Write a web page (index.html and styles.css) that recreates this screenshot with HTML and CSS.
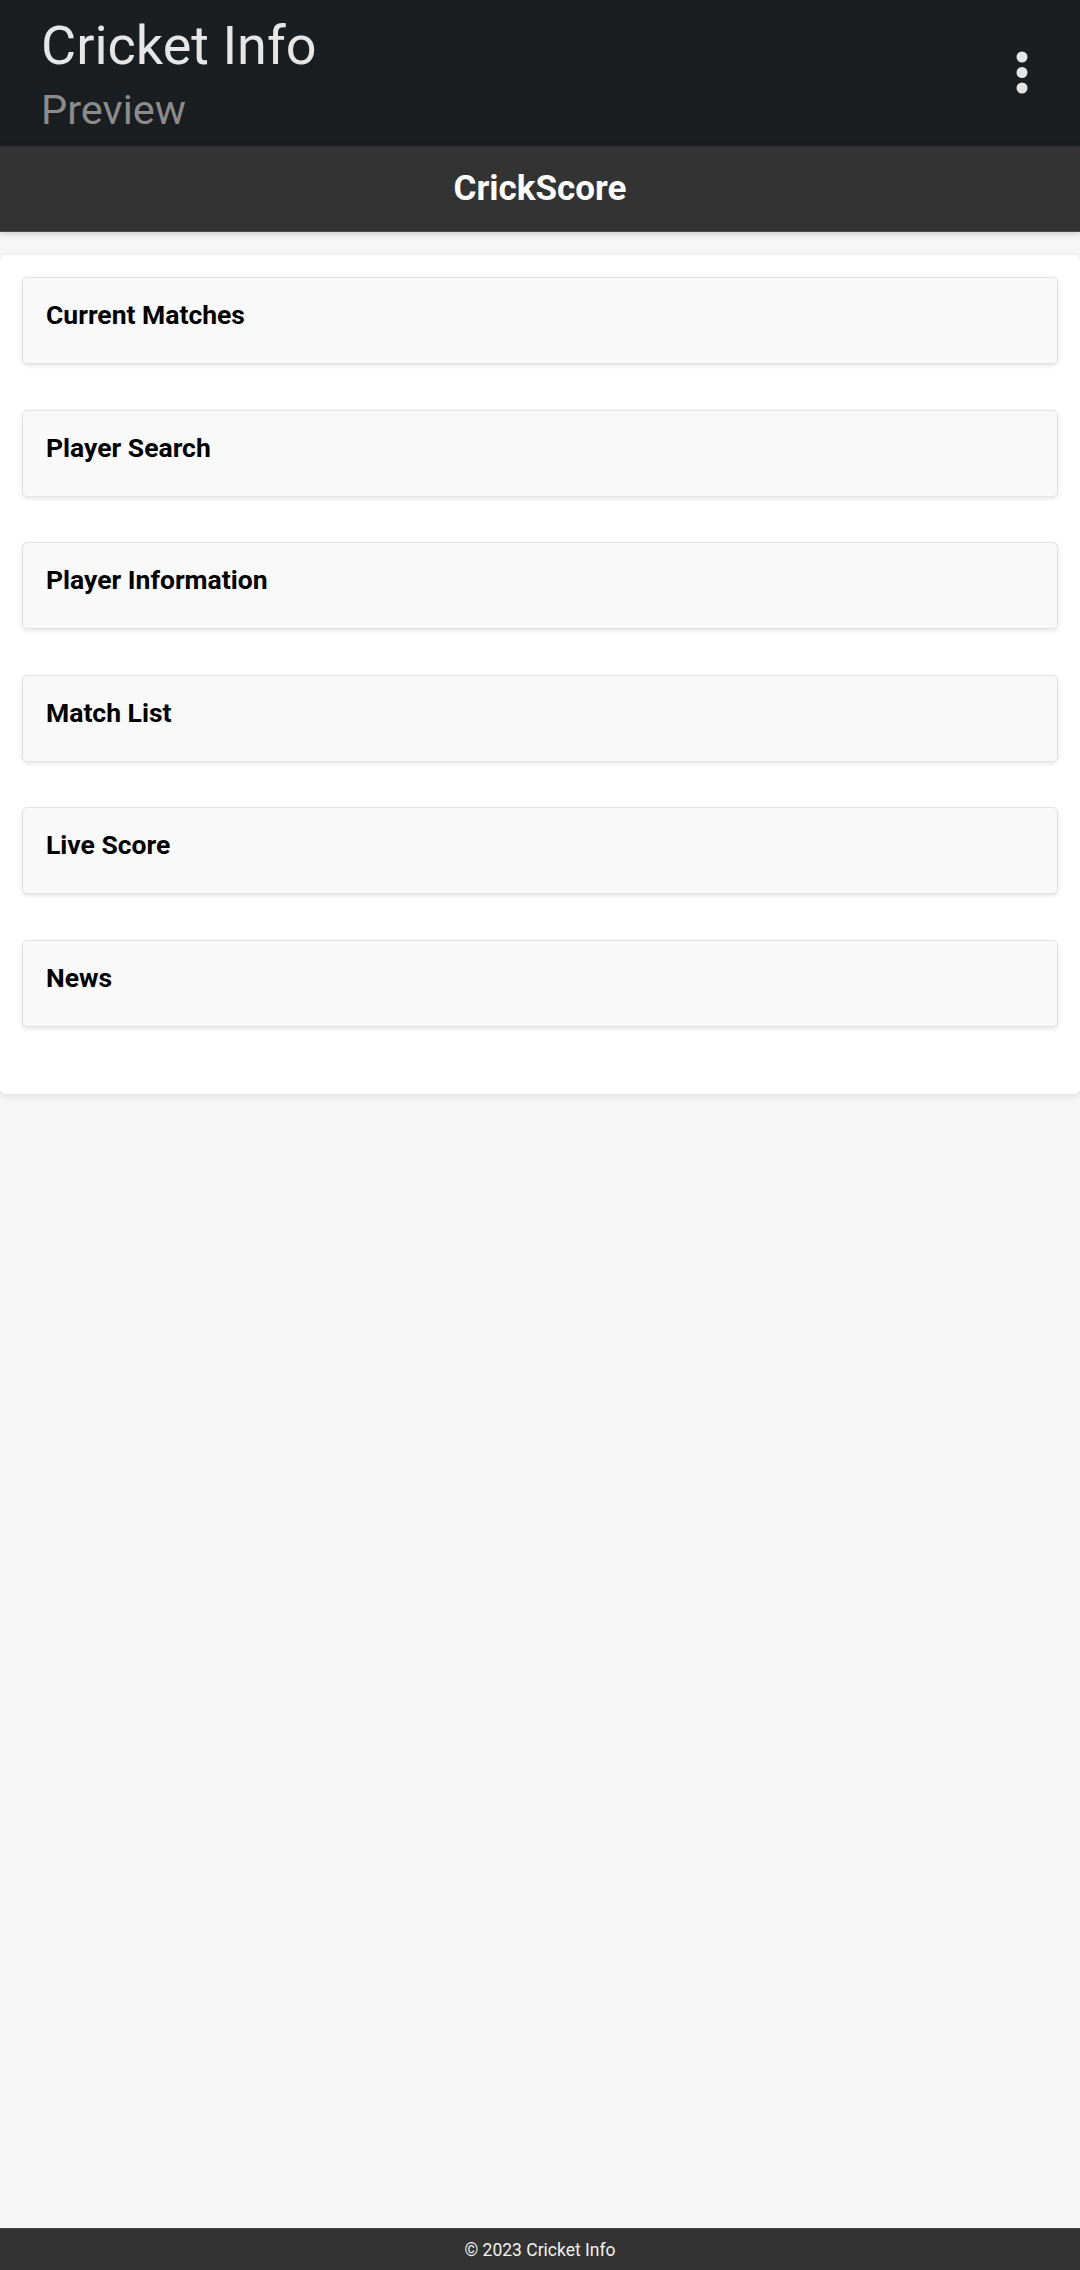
FILE: index.html
```html
<!DOCTYPE html>
<html lang="en">
<head>
<meta charset="utf-8">
<title>Cricket Info</title>
<link rel="stylesheet" href="styles.css">
</head>
<body>
<header class="appbar">
  <div class="appbar-titles">
    <div class="appbar-title">Cricket Info</div>
    <div class="appbar-sub">Preview</div>
  </div>
  <svg class="appbar-menu" width="12" height="44" viewBox="0 0 12 44" aria-hidden="true">
    <circle cx="6" cy="6" r="5.5"/>
    <circle cx="6" cy="21.5" r="5.5"/>
    <circle cx="6" cy="37" r="5.5"/>
  </svg>
</header>
<div class="titlebar"><h1>CrickScore</h1></div>
<main class="main">
  <section class="panel">
    <div class="card"><h2>Current Matches</h2></div>
    <div class="card"><h2>Player Search</h2></div>
    <div class="card"><h2>Player Information</h2></div>
    <div class="card"><h2>Match List</h2></div>
    <div class="card"><h2>Live Score</h2></div>
    <div class="card"><h2>News</h2></div>
  </section>
</main>
<footer class="footer">© 2023 Cricket Info</footer>
</body>
</html>
```
FILE: styles.css
```css
* { box-sizing: border-box; }
html, body { margin: 0; padding: 0; }
body {
  font-family: Roboto, "Liberation Sans", Arial, sans-serif;
  background: #f6f6f6;
  min-height: 2270px;
  display: flex;
  flex-direction: column;
}
.appbar {
  background: #1b1e21;
  height: 146px;
  display: flex;
  align-items: center;
  justify-content: space-between;
  padding: 0 52px 0 41px;
}
.appbar-titles {
  display: flex;
  flex-direction: column;
  padding-top: 2px;
}
.appbar-title {
  font-size: 54px;
  line-height: 60px;
  color: #e6e6e6;
}
.appbar-sub {
  font-size: 41.5px;
  line-height: 44px;
  margin-top: 12px;
  color: #8c8c8d;
}
.appbar-menu { fill: #e4e4e4; display: block; }
.titlebar {
  background: #333333;
  height: 86px;
  display: flex;
  align-items: center;
  justify-content: center;
  border-bottom: 1px solid #4a4a4a;
  box-shadow: 0 2px 6px rgba(0,0,0,0.18);
  position: relative;
}
.titlebar h1 {
  margin: 0;
  font-size: 35px;
  font-weight: 700;
  color: #ffffff;
  line-height: 40px;
}
.main {
  flex: 1;
  padding-top: 23px;
}
.panel {
  background: #ffffff;
  border-radius: 6px;
  box-shadow: 0 2px 8px rgba(0,0,0,0.1);
  padding: 22px 22px 21.5px;
}
.card {
  background: #f9f9f9;
  border: 1px solid #e3e3e3;
  border-radius: 5px;
  box-shadow: 0 2px 4px rgba(0,0,0,0.1);
  height: 87px;
  padding: 22px 23px 0;
  margin-bottom: 45.5px;
}
.card h2 {
  margin: 0;
  font-size: 26.5px;
  line-height: 30px;
  font-weight: 700;
  color: #000000;
}
.footer {
  background: #333333;
  height: 42px;
  border-top: 1px solid #444;
  color: #f2f2f2;
  font-size: 17.5px;
  display: flex;
  align-items: center;
  justify-content: center;
}
```
